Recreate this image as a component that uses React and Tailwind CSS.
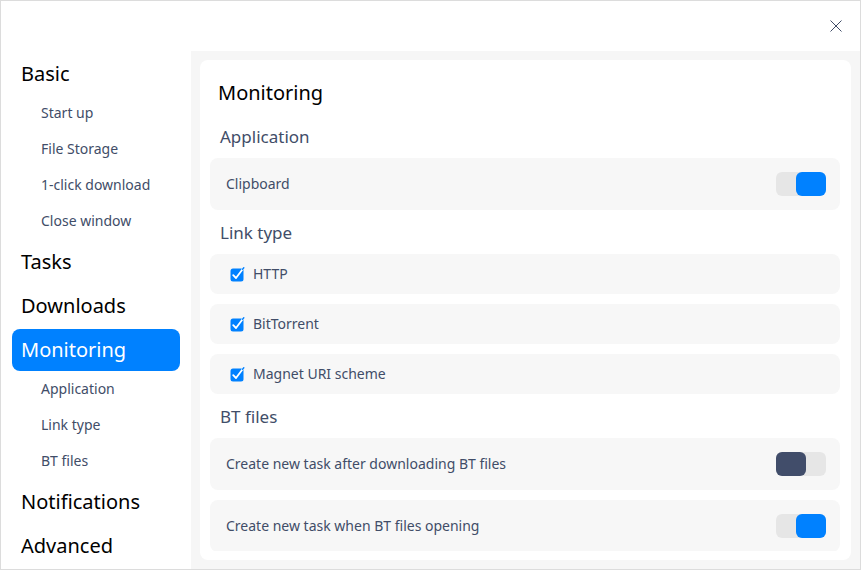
import React from "react";

const nav = [
  { label: "Basic", subs: ["Start up", "File Storage", "1-click download", "Close window"] },
  { label: "Tasks", subs: [] },
  { label: "Downloads", subs: [] },
  { label: "Monitoring", active: true, subs: ["Application", "Link type", "BT files"] },
  { label: "Notifications", subs: [] },
  { label: "Advanced", subs: [] },
];

const Toggle = ({ on }) => (
  <div className={`w-[50px] h-[24px] rounded-[6px] bg-[#e6e6e6] flex ${on ? "justify-end" : "justify-start"}`}>
    <div className={`w-[30px] h-[24px] rounded-[6px] ${on ? "bg-[#0081ff]" : "bg-[#414d6a]"}`} />
  </div>
);

const Check = () => (
  <svg width="15" height="15" viewBox="0 0 15 15" className="shrink-0">
    <rect x="0.5" y="1.5" width="13" height="13" rx="2.5" fill="#0081ff" />
    <path d="M3.2 8.2 L6 11 L12.6 2.2" stroke="#ffffff" strokeWidth="1.8" fill="none" strokeLinecap="round" strokeLinejoin="round" />
    <path d="M12.6 2.2 L13.8 0.8" stroke="#0081ff" strokeWidth="1.4" strokeLinecap="round" />
  </svg>
);

const SectionHeader = ({ children }) => (
  <div className="h-[44px] shrink-0 flex items-center pl-[10px] pt-[2px] text-[17px] text-[#414d68]">{children}</div>
);

const ToggleRow = ({ label, on }) => (
  <div className="h-[52px] shrink-0 rounded-[8px] bg-[#f7f7f7] flex items-center justify-between pl-[16px] pr-[14px]">
    <span className="text-[14px] text-[#414d68] pb-[2px]">{label}</span>
    <Toggle on={on} />
  </div>
);

const CheckRow = ({ label }) => (
  <div className="h-[40px] shrink-0 rounded-[8px] bg-[#f7f7f7] flex items-center gap-[8px] pl-[20px]">
    <Check />
    <span className="text-[14px] text-[#414d68] pb-[2px]">{label}</span>
  </div>
);

export default function App() {
  return (
    <div className="w-[861px] h-[570px] border border-[#dcdcdc] bg-white flex flex-col font-['Noto_Sans',sans-serif] overflow-hidden">
      {/* title bar */}
      <div className="h-[50px] shrink-0 flex items-center justify-end pr-[18px]">
        <svg width="12" height="12" viewBox="0 0 12 12">
          <path d="M0.5 0.5 L11.5 11.5 M11.5 0.5 L0.5 11.5" stroke="#414d68" strokeWidth="1" />
        </svg>
      </div>

      <div className="flex flex-1 min-h-0">
        {/* sidebar */}
        <div className="w-[190px] shrink-0 px-[11px]">
          {nav.map((item) => (
            <div key={item.label}>
              <div
                className={`mt-[2px] h-[42px] flex items-center pl-[9px] rounded-[8px] text-[20px] ${
                  item.active ? "bg-[#0081ff] text-white" : "text-black"
                }`}
              >
                {item.label}
              </div>
              {item.subs.map((s) => (
                <div key={s} className="h-[36px] flex items-center pl-[29px] pb-[2px] text-[14px] text-[#414d68]">
                  {s}
                </div>
              ))}
            </div>
          ))}
        </div>

        {/* content */}
        <div className="flex-1 bg-[#f6f6f6] p-[9px]">
          <div className="h-full bg-white rounded-[8px] pl-[10px] pr-[11px] pb-[9px] flex flex-col">
            <div className="flex-1 overflow-hidden flex flex-col">
              <div className="h-[54px] shrink-0 pt-[19px] pl-[8px] text-[20px] leading-[28px] text-black">Monitoring</div>

              <SectionHeader>Application</SectionHeader>
              <ToggleRow label="Clipboard" on />

              <SectionHeader>Link type</SectionHeader>
              <div className="flex flex-col gap-[10px]">
                <CheckRow label="HTTP" />
                <CheckRow label="BitTorrent" />
                <CheckRow label="Magnet URI scheme" />
              </div>

              <SectionHeader>BT files</SectionHeader>
              <div className="flex flex-col gap-[10px]">
                <ToggleRow label="Create new task after downloading BT files" on={false} />
                <ToggleRow label="Create new task when BT files opening" on />
              </div>
            </div>
          </div>
        </div>
      </div>
    </div>
  );
}
